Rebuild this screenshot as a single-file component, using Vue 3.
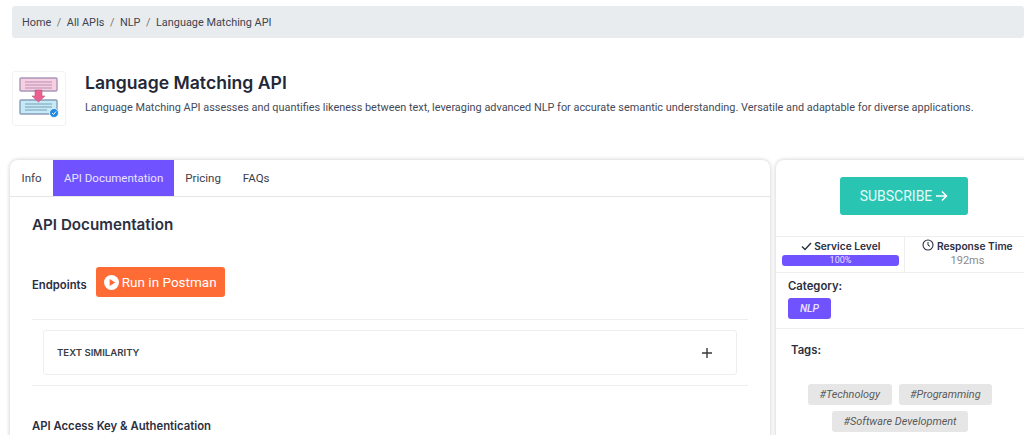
<script setup>
const crumbs = ['Home', 'All APIs', 'NLP', 'Language Matching API']
const tabs = ['Info', 'API Documentation', 'Pricing', 'FAQs']
</script>

<template>
  <div class="page">
    <nav class="crumbs">
      <template v-for="(c, i) in crumbs" :key="c">
        <span v-if="i" class="sep">/</span>
        <span>{{ c }}</span>
      </template>
    </nav>

    <header class="head">
      <div class="logo">
        <svg width="40" height="44" viewBox="0 0 40 44">
          <rect x="1" y="1" width="37" height="13" rx="1" fill="#f8cfe0" stroke="#a698b8" stroke-width="1.4" />
          <path d="M6 5h27M6 8h27M6 11h27" stroke="#b48fb4" stroke-width="1" />
          <rect x="1" y="23" width="37" height="14" rx="1" fill="#c4eaf6" stroke="#8a9cb8" stroke-width="1.4" />
          <path d="M6 27h27M6 30h27M6 33h22" stroke="#7d9cb8" stroke-width="1" />
          <path d="M16 13h7v6h3l-6.500 6-6.500-6h3z" fill="#ec5f8e" stroke="#b85a86" stroke-width=".6" />
          <circle cx="35" cy="36" r="4.500" fill="#1e88e5" stroke="#fff" stroke-width=".8" />
          <path d="M33 36l1.500 1.500 2.500-3" fill="none" stroke="#fff" stroke-width="1" />
        </svg>
      </div>
      <div class="head-text">
        <h1>Language Matching API</h1>
        <p>Language Matching API assesses and quantifies likeness between text, leveraging advanced NLP for accurate semantic understanding. Versatile and adaptable for diverse applications.</p>
      </div>
    </header>

    <div class="cols">
      <main class="card main">
        <div class="tabs">
          <span v-for="(t, i) in tabs" :key="t" class="tab" :class="{ active: i === 1 }">{{ t }}</span>
        </div>
        <div class="body">
          <h2>API Documentation</h2>
          <div class="endpoints">
            <span class="label">Endpoints</span>
            <span class="postman">
              <svg width="15" height="15" viewBox="0 0 16 16">
                <circle cx="8" cy="8" r="8" fill="#fff" />
                <path d="M6 4.300v7.400L12 8z" fill="#ff6b35" />
              </svg>
              Run in Postman
            </span>
          </div>
          <hr class="rule first" />
          <div class="accordion">
            <span>TEXT SIMILARITY</span>
            <svg width="12" height="12" viewBox="0 0 12 12">
              <path d="M6 1v10M1 6h10" stroke="#3a3a3a" stroke-width="1.400" />
            </svg>
          </div>
          <hr class="rule second" />
          <h3>API Access Key &amp; Authentication</h3>
        </div>
      </main>

      <aside class="card side">
        <div class="sub-wrap">
          <span class="subscribe">SUBSCRIBE
            <svg width="13" height="12" viewBox="0 0 13 12">
              <path d="M1 6h10.500M7 1.500L11.500 6 7 10.500" fill="none" stroke="#fff" stroke-width="1.500" />
            </svg>
          </span>
        </div>
        <div class="stats">
          <div class="stat left">
            <div class="stat-title">
              <svg width="11" height="9" viewBox="0 0 11 9"><path d="M1 4.500l3 3L10 1" fill="none" stroke="#2b2f3f" stroke-width="1.400" /></svg>
              Service Level
            </div>
            <div class="bar">100%</div>
          </div>
          <div class="stat right">
            <div class="stat-title">
              <svg width="12" height="12" viewBox="0 0 12 12"><circle cx="6" cy="6" r="5" fill="none" stroke="#2b2f3f" stroke-width="1.100" /><path d="M6 3v3.200l2 1.200" fill="none" stroke="#2b2f3f" stroke-width="1" /></svg>
              Response Time
            </div>
            <div class="ms">192ms</div>
          </div>
        </div>
        <div class="category">
          <div class="side-label">Category:</div>
          <span class="nlp">NLP</span>
        </div>
        <div class="tags">
          <div class="side-label">Tags:</div>
          <div class="tag-list">
            <span class="tag">#Technology</span>
            <span class="tag">#Programming</span>
            <span class="tag">#Software Development</span>
          </div>
        </div>
      </aside>
    </div>
  </div>
</template>

<style scoped>
.page {
  width: 1024px;
  height: 435px;
  overflow: hidden;
  box-sizing: border-box;
  padding-top: 6px;
  background: #fff;
  font-family: Roboto, "Liberation Sans", sans-serif;
  color: #2b2f3f;
}
.crumbs {
  margin-left: 12px;
  height: 32px;
  display: flex;
  align-items: center;
  padding-left: 10px;
  background: #e9ecef;
  border-radius: 3px;
  font-size: 10.9px;
  color: #40444f;
}
.sep { margin: 0 5.5px; color: #777; }
.head {
  display: flex;
  margin: 33px 0 0 12px;
  height: 56px;
}
.logo {
  width: 54px;
  height: 55px;
  box-sizing: border-box;
  border: 1px solid #f2f2f2;
  border-radius: 3px;
  display: flex;
  align-items: center;
  justify-content: center;
}
.head-text { margin-left: 19px; }
h1 {
  margin: 0;
  font: 600 17.6px/24px Inter, Roboto, sans-serif;
  color: #232838;
}
.head p {
  margin: 5px 0 0;
  font-size: 10.9px;
  line-height: 16px;
  color: #444a58;
  white-space: nowrap;
}
.cols {
  display: flex;
  gap: 6px;
  margin: 33px 0 0 10px;
}
.card {
  background: #fff;
  border-radius: 8px;
  box-shadow: 0 0 4px rgba(0, 0, 0, .22);
  box-sizing: border-box;
  height: 320px;
}
.main { width: 760px; flex: none; }
.side { flex: 1; min-width: 260px; border-radius: 8px 0 0 8px; }
.tabs {
  display: flex;
  height: 37px;
  border-bottom: 1px solid #e6e6e6;
  box-sizing: border-box;
  font-size: 11.5px;
  color: #3c404c;
}
.tab {
  padding: 0 11px;
  line-height: 36px;
}
.tab:first-child { padding: 0 11.5px; }
.tab.active { background: #7152ff; color: #e8e4ff; }
.body { padding: 0 22px; }
h2 {
  margin: 18px 0 0;
  font: 600 15.2px/20px Inter, Roboto, sans-serif;
  color: #2b2f3f;
}
.endpoints {
  display: flex;
  align-items: center;
  gap: 9px;
  margin-top: 32px;
}
.label {
  font: 600 11.3px/14px Inter, Roboto, sans-serif;
  margin-top: 6px;
}
.postman {
  width: 129px;
  height: 30px;
  box-sizing: border-box;
  display: flex;
  align-items: center;
  justify-content: center;
  gap: 3px;
  background: #ff6b35;
  border-radius: 3px;
  color: #fff;
  font-size: 13.500px;
}
.rule {
  margin: 0;
  border: 0;
  border-top: 1px solid #eee;
}
.rule.first { margin-top: 22px; }
.rule.second { margin-top: 10px; }
.accordion {
  margin: 10px 11px 0;
  height: 45px;
  box-sizing: border-box;
  border: 1px solid #eee;
  border-radius: 3px;
  display: flex;
  align-items: center;
  justify-content: space-between;
  padding: 0 23px 0 13px;
  font: 600 9.6px/12px Inter, Roboto, sans-serif;
  color: #3a3d48;
}
h3 {
  margin: 33px 0 0;
  font: 600 11.3px/14px Inter, Roboto, sans-serif;
  color: #2b2f3f;
}
.sub-wrap {
  height: 76px;
  box-sizing: border-box;
  padding-top: 17px;
  display: flex;
  justify-content: center;
  width: 256px;
}
.subscribe {
  width: 128px;
  height: 38px;
  background: #2ac4b3;
  border-radius: 3px;
  color: #e6fbf8;
  font-size: 14px;
  display: flex;
  align-items: center;
  justify-content: center;
  gap: 3px;
}
.stats {
  display: flex;
  width: 248px;
  height: 35px;
  border-top: 1px solid #eee;
  border-bottom: 1px solid #eee;
}
.stat { text-align: center; box-sizing: border-box; }
.left {
  width: 129px;
  padding: 2px 5px 0 6px;
  border-right: 1px solid #eee;
}
.right { width: 119px; padding: 2px 0 0 6px; }
.stat-title {
  font: 600 10.2px/14px Inter, Roboto, sans-serif;
  color: #2b2f3f;
  white-space: nowrap;
}
.stat-title svg { vertical-align: -1px; }
.bar {
  margin-top: 2px;
  height: 11px;
  border-radius: 3px;
  background: #7152ff;
  color: #e8e4ff;
  font-size: 9px;
  line-height: 11px;
}
.ms {
  font-size: 11px;
  line-height: 14px;
  color: #8a8a8a;
  margin-top: 1px;
}
.category {
  height: 56px;
  width: 248px;
  padding: 6px 0 0 12px;
  box-sizing: border-box;
  border-bottom: 1px solid #eee;
}
.side-label {
  font: 600 11.3px/14px Inter, Roboto, sans-serif;
  color: #2b2f3f;
}
.nlp {
  display: inline-block;
  margin-top: 5px;
  width: 43px;
  height: 21px;
  text-align: center;
  line-height: 21px;
  background: #7152ff;
  border-radius: 3px;
  color: #e8e4ff;
  font-size: 10.500px;
  font-weight: 500;
  font-style: italic;
}
.tags { padding: 14px 0 0 15px; width: 248px; box-sizing: border-box; }
.tag-list {
  margin: 27px 0 0 -15px;
  width: 248px;
  display: flex;
  flex-wrap: wrap;
  justify-content: center;
  gap: 6px 7px;
}
.tag {
  height: 21px;
  line-height: 21px;
  padding: 0 11.5px;
  border-radius: 3px;
  background: #e6e6e6;
  color: #5a5a5a;
  font-size: 10.9px;
  font-style: italic;
}
</style>
